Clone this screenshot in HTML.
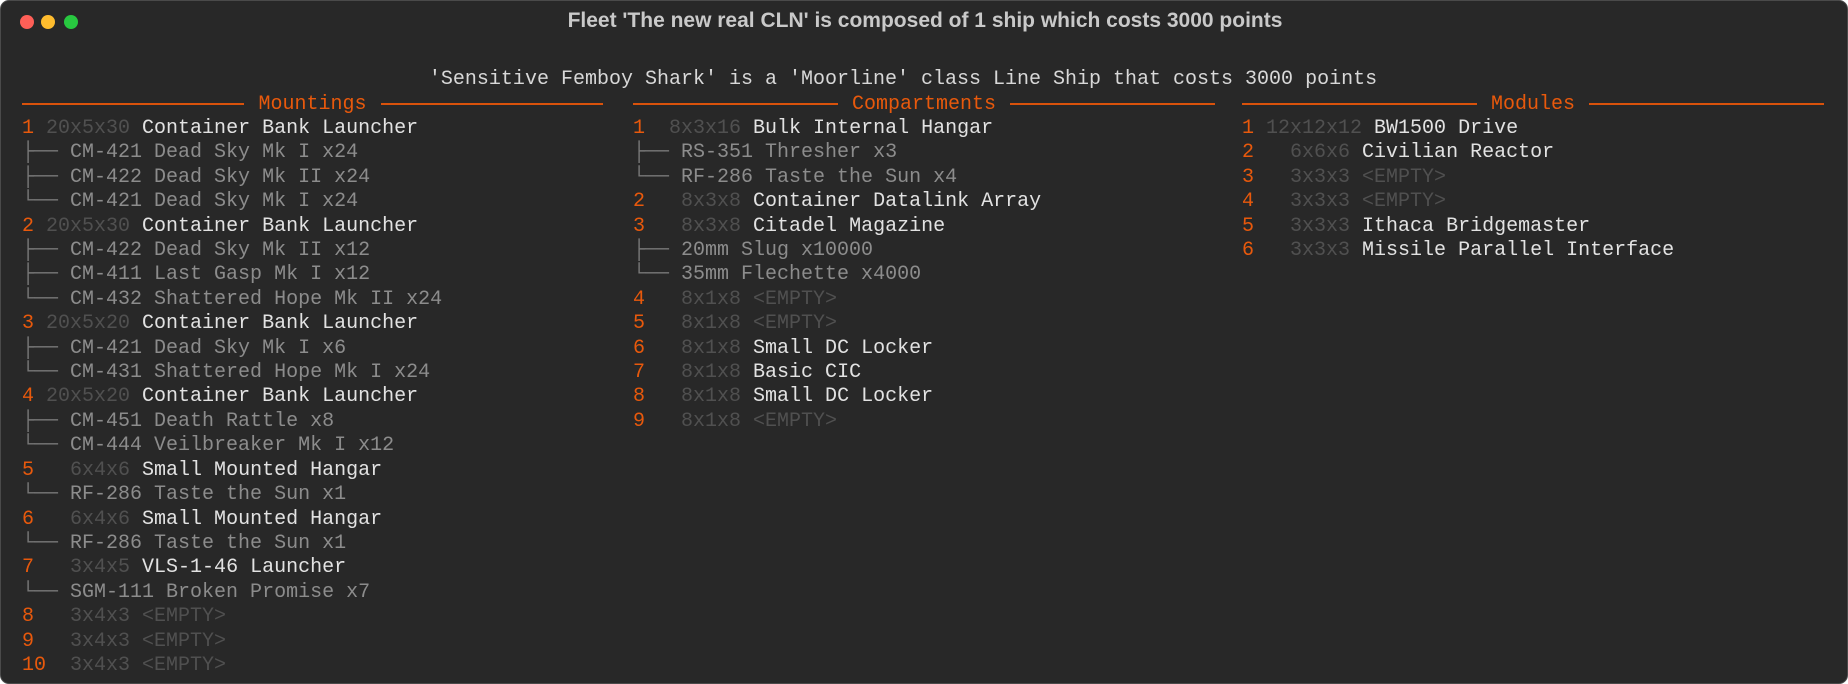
<!DOCTYPE html>
<html><head><meta charset="utf-8"><style>
html,body{margin:0;padding:0;background:#ffffff;}
body{width:1848px;height:684px;position:relative;overflow:hidden;}
.win{position:absolute;left:0;top:0;width:1846px;height:682px;background:#282828;border:1px solid #4a4a4a;border-radius:9px;}
.dot{position:absolute;top:14px;width:14px;height:14px;border-radius:50%;}
.title{position:absolute;top:8px;left:0;width:1848px;text-align:center;font:bold 21px "Liberation Sans",sans-serif;color:#c9c9c9;line-height:24px;}
pre{margin:0;position:absolute;font:20px/24.4px "Liberation Mono",monospace;color:#e2e2e2;white-space:pre;}
.o{color:#e8590c}.d{color:#505050}.g{color:#8c8c8c}.t{color:#777777}
.hdr{position:absolute;top:91px;height:24.4px;display:flex;align-items:center;font:20px "Liberation Mono",monospace;color:#e8590c;}
.hdr i{flex:1;height:2px;background:#d9520b;display:block}
.hdr span{padding:0 14px;}
</style></head><body>
<div class="win">
<div class="dot" style="left:19px;background:#fe5f57"></div>
<div class="dot" style="left:40px;background:#febc2e"></div>
<div class="dot" style="left:63px;background:#28c840"></div>
<div class="title">Fleet 'The new real CLN' is composed of 1 ship which costs 3000 points</div>
<pre style="left:-22px;width:1848px;text-align:center;top:67px;color:#d8d8d8">'Sensitive Femboy Shark' is a 'Moorline' class Line Ship that costs 3000 points</pre>
<div class="hdr" style="left:21px;width:581px"><i></i><span>Mountings</span><i></i></div>
<div class="hdr" style="left:632px;width:582px"><i></i><span>Compartments</span><i></i></div>
<div class="hdr" style="left:1241px;width:582px"><i></i><span>Modules</span><i></i></div>
<pre style="left:21px;top:116px"><span class="o">1</span> <span class="d">20x5x30</span> Container Bank Launcher
<span class="t">├──</span> <span class="g">CM-421 Dead Sky Mk I x24</span>
<span class="t">├──</span> <span class="g">CM-422 Dead Sky Mk II x24</span>
<span class="t">└──</span> <span class="g">CM-421 Dead Sky Mk I x24</span>
<span class="o">2</span> <span class="d">20x5x30</span> Container Bank Launcher
<span class="t">├──</span> <span class="g">CM-422 Dead Sky Mk II x12</span>
<span class="t">├──</span> <span class="g">CM-411 Last Gasp Mk I x12</span>
<span class="t">└──</span> <span class="g">CM-432 Shattered Hope Mk II x24</span>
<span class="o">3</span> <span class="d">20x5x20</span> Container Bank Launcher
<span class="t">├──</span> <span class="g">CM-421 Dead Sky Mk I x6</span>
<span class="t">└──</span> <span class="g">CM-431 Shattered Hope Mk I x24</span>
<span class="o">4</span> <span class="d">20x5x20</span> Container Bank Launcher
<span class="t">├──</span> <span class="g">CM-451 Death Rattle x8</span>
<span class="t">└──</span> <span class="g">CM-444 Veilbreaker Mk I x12</span>
<span class="o">5</span>   <span class="d">6x4x6</span> Small Mounted Hangar
<span class="t">└──</span> <span class="g">RF-286 Taste the Sun x1</span>
<span class="o">6</span>   <span class="d">6x4x6</span> Small Mounted Hangar
<span class="t">└──</span> <span class="g">RF-286 Taste the Sun x1</span>
<span class="o">7</span>   <span class="d">3x4x5</span> VLS-1-46 Launcher
<span class="t">└──</span> <span class="g">SGM-111 Broken Promise x7</span>
<span class="o">8</span>   <span class="d">3x4x3 &lt;EMPTY&gt;</span>
<span class="o">9</span>   <span class="d">3x4x3 &lt;EMPTY&gt;</span>
<span class="o">10</span>  <span class="d">3x4x3 &lt;EMPTY&gt;</span></pre>
<pre style="left:632px;top:116px"><span class="o">1</span>  <span class="d">8x3x16</span> Bulk Internal Hangar
<span class="t">├──</span> <span class="g">RS-351 Thresher x3</span>
<span class="t">└──</span> <span class="g">RF-286 Taste the Sun x4</span>
<span class="o">2</span>   <span class="d">8x3x8</span> Container Datalink Array
<span class="o">3</span>   <span class="d">8x3x8</span> Citadel Magazine
<span class="t">├──</span> <span class="g">20mm Slug x10000</span>
<span class="t">└──</span> <span class="g">35mm Flechette x4000</span>
<span class="o">4</span>   <span class="d">8x1x8 &lt;EMPTY&gt;</span>
<span class="o">5</span>   <span class="d">8x1x8 &lt;EMPTY&gt;</span>
<span class="o">6</span>   <span class="d">8x1x8</span> Small DC Locker
<span class="o">7</span>   <span class="d">8x1x8</span> Basic CIC
<span class="o">8</span>   <span class="d">8x1x8</span> Small DC Locker
<span class="o">9</span>   <span class="d">8x1x8 &lt;EMPTY&gt;</span></pre>
<pre style="left:1241px;top:116px"><span class="o">1</span> <span class="d">12x12x12</span> BW1500 Drive
<span class="o">2</span>   <span class="d">6x6x6</span> Civilian Reactor
<span class="o">3</span>   <span class="d">3x3x3 &lt;EMPTY&gt;</span>
<span class="o">4</span>   <span class="d">3x3x3 &lt;EMPTY&gt;</span>
<span class="o">5</span>   <span class="d">3x3x3</span> Ithaca Bridgemaster
<span class="o">6</span>   <span class="d">3x3x3</span> Missile Parallel Interface</pre>
</div>
</body></html>
